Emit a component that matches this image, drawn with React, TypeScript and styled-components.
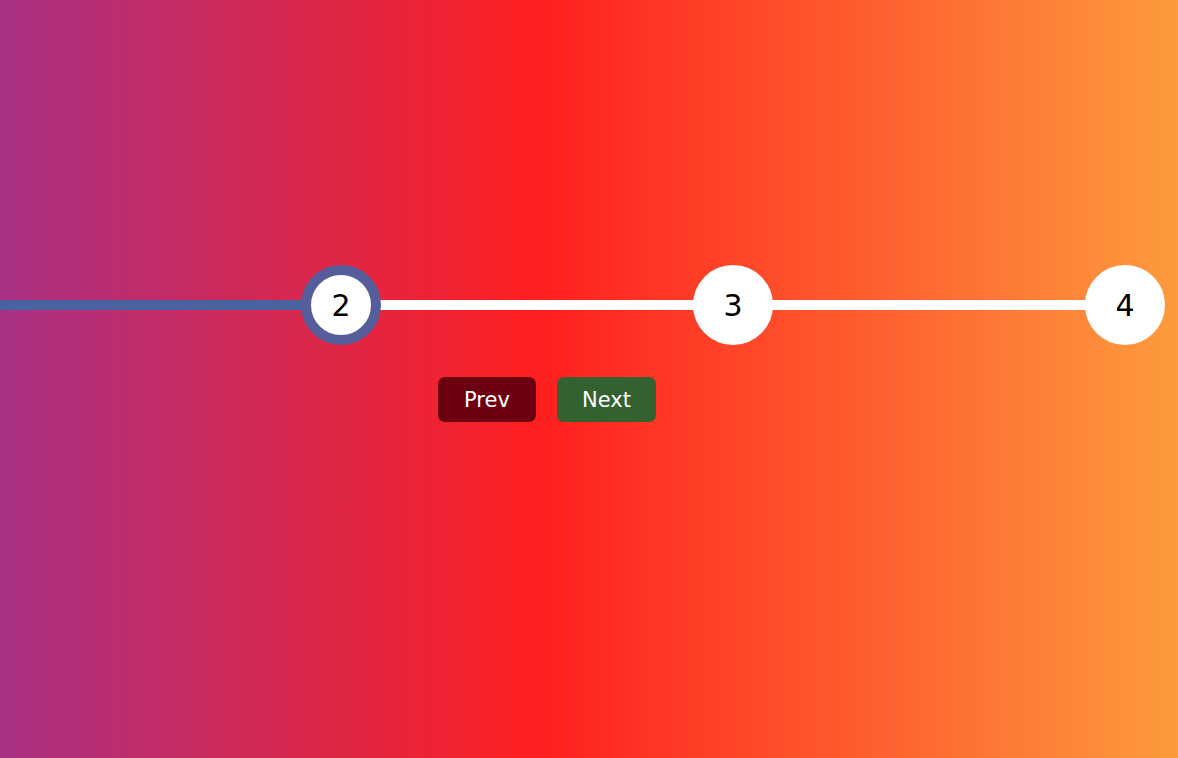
import React, { useState } from "react";
import styled, { createGlobalStyle } from "styled-components";

const Global = createGlobalStyle`
  html, body { margin: 0; padding: 0; }
  body {
    font-family: "DejaVu Sans", Verdana, sans-serif;
    overflow: hidden;
  }
`;

const Page = styled.div`
  width: 1178px;
  height: 758px;
  overflow: hidden;
  background: linear-gradient(to right, #a83185 0%, #ff1f1f 46%, #fd9b3d 100%);
  display: flex;
  flex-direction: column;
  padding-top: 265px;
  box-sizing: border-box;
`;

const Track = styled.div`
  position: relative;
  margin-left: -91px;
  width: 1256px;
  display: flex;
  justify-content: space-between;
  align-items: center;
`;

const Line = styled.div`
  position: absolute;
  left: 40px;
  right: 40px;
  top: 35px;
  height: 10px;
  background: #ffffff;
  z-index: 0;
`;

const Progress = styled.div`
  position: absolute;
  left: 40px;
  top: 35px;
  height: 10px;
  background: #4a629f;
  z-index: 0;
`;

const Circle = styled.div<{ $active: boolean }>`
  position: relative;
  z-index: 1;
  width: 80px;
  height: 80px;
  box-sizing: border-box;
  border-radius: 50%;
  background: #ffffff;
  border: 10px solid ${(p) => (p.$active ? "#555d9b" : "#ffffff")};
  display: flex;
  align-items: center;
  justify-content: center;
  font-size: 30px;
  color: #000;
`;

const Buttons = styled.div`
  display: flex;
  gap: 21px;
  margin-top: 32px;
  margin-left: 438px;
`;

const Button = styled.button<{ $variant: "prev" | "next" }>`
  height: 45px;
  width: ${(p) => (p.$variant === "prev" ? "98px" : "99px")};
  border: none;
  border-radius: 7px;
  background: ${(p) => (p.$variant === "prev" ? "#6c0011" : "#33612f")};
  color: #ffffff;
  font-family: "DejaVu Sans", Verdana, sans-serif;
  font-size: 21px;
  padding: 0;
  cursor: pointer;
`;

export default function App() {
  const [current, setCurrent] = useState(2);
  const steps = [1, 2, 3, 4];
  const spacing = 392;
  return (
    <Page>
      <Global />
      <Track>
        <Line />
        <Progress style={{ width: `${(current - 1) * spacing}px` }} />
        {steps.map((s) => (
          <Circle key={s} $active={s <= current}>
            {s}
          </Circle>
        ))}
      </Track>
      <Buttons>
        <Button $variant="prev" onClick={() => setCurrent(Math.max(1, current - 1))}>
          Prev
        </Button>
        <Button $variant="next" onClick={() => setCurrent(Math.min(4, current + 1))}>
          Next
        </Button>
      </Buttons>
    </Page>
  );
}
